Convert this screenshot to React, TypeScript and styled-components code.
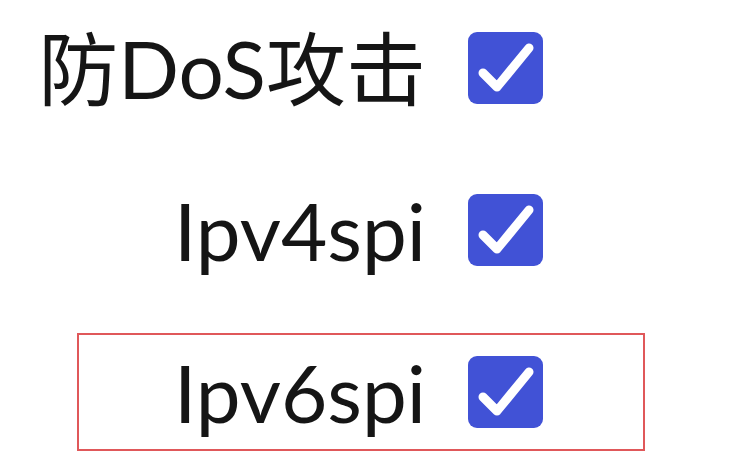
import styled, { createGlobalStyle } from "styled-components";

const GlobalStyle = createGlobalStyle`
  body {
    margin: 0;
    background: #ffffff;
    font-family: Lato, "Noto Sans CJK SC", sans-serif;
  }
`;

const options = [
  { label: "防DoS攻击", checked: true },
  { label: "Ipv4spi", checked: true },
  { label: "Ipv6spi", checked: true, highlight: true },
];

function App(): JSX.Element {
  return (
    <>
      <GlobalStyle />
      <Form>
        {options.map((opt) => (
          <Row key={opt.label} $highlight={!!opt.highlight}>
            <Label>
              <span>{opt.label}</span>
            </Label>
            <Box $checked={opt.checked}>
              {opt.checked && (
                <svg width="75" height="72" viewBox="0 0 75 72">
                  <path
                    d="M15 41 L29 55 L61 16"
                    fill="none"
                    stroke="#ffffff"
                    strokeWidth="9"
                    strokeLinecap="round"
                    strokeLinejoin="round"
                  />
                </svg>
              )}
            </Box>
          </Row>
        ))}
      </Form>
    </>
  );
}

export default App;

const Form = styled.div`
  display: flex;
  flex-direction: column;
  gap: 44px;
  padding: 9px 0 0 77px;
`;

const Row = styled.div<{ $highlight: boolean }>`
  display: grid;
  grid-template-columns: 347px 75px;
  column-gap: 42px;
  align-items: center;
  box-sizing: border-box;
  width: 568px;
  height: 118px;
  border: 2px solid ${(p) => (p.$highlight ? "#e0585a" : "transparent")};
`;

const Label = styled.div`
  display: flex;
  justify-content: flex-end;
  font-size: 80px;
  line-height: 1;
  color: #151515;
  white-space: nowrap;
`;

const Box = styled.div<{ $checked: boolean }>`
  width: 75px;
  height: 72px;
  border-radius: 9px;
  background: ${(p) => (p.$checked ? "#4152d6" : "#ffffff")};
  display: flex;
  align-items: center;
  justify-content: center;
`;
